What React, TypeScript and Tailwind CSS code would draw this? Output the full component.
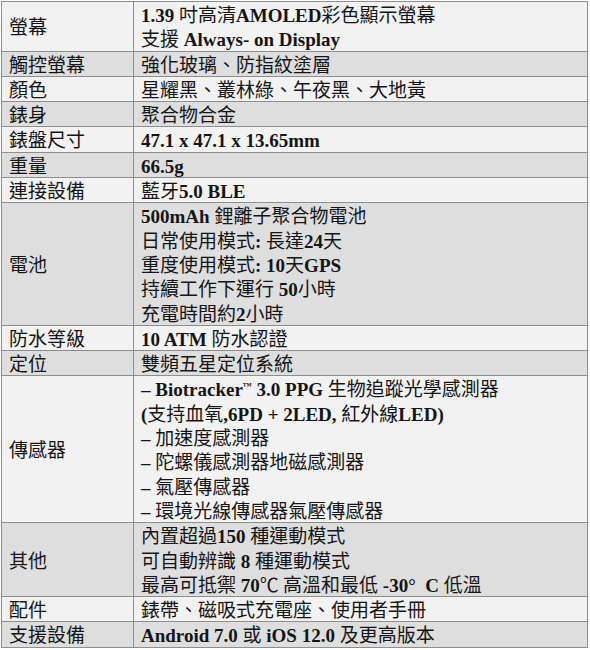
import React from "react";

type Row = { label: string; lines: string[] };

const rows: Row[] = [
  { label: "螢幕", lines: ["1.39 吋高清AMOLED彩色顯示螢幕", "支援 Always- on Display"] },
  { label: "觸控螢幕", lines: ["強化玻璃、防指紋塗層"] },
  { label: "顏色", lines: ["星耀黑、叢林綠、午夜黑、大地黃"] },
  { label: "錶身", lines: ["聚合物合金"] },
  { label: "錶盤尺寸", lines: ["47.1 x 47.1 x 13.65mm"] },
  { label: "重量", lines: ["66.5g"] },
  { label: "連接設備", lines: ["藍牙5.0 BLE"] },
  {
    label: "電池",
    lines: [
      "500mAh 鋰離子聚合物電池",
      "日常使用模式: 長達24天",
      "重度使用模式: 10天GPS",
      "持續工作下運行 50小時",
      "充電時間約2小時",
    ],
  },
  { label: "防水等級", lines: ["10 ATM 防水認證"] },
  { label: "定位", lines: ["雙頻五星定位系統"] },
  {
    label: "傳感器",
    lines: [
      "– Biotracker™ 3.0 PPG 生物追蹤光學感測器",
      "(支持血氧,6PD + 2LED, 紅外線LED)",
      "– 加速度感測器",
      "– 陀螺儀感測器地磁感測器",
      "– 氣壓傳感器",
      "– 環境光線傳感器氣壓傳感器",
    ],
  },
  {
    label: "其他",
    lines: ["內置超過150 種運動模式", "可自動辨識 8 種運動模式", "最高可抵禦 70℃ 高溫和最低 -30°  C 低溫"],
  },
  { label: "配件", lines: ["錶帶、磁吸式充電座、使用者手冊"] },
  { label: "支援設備", lines: ["Android 7.0 或 iOS 12.0 及更高版本"] },
];

const LATIN = /^[\u0020-\u02FF\u2013\u2122]+$/;

function Mixed({ text }: { text: string }) {
  const parts = text.split(/([\u0020-\u02FF\u2013\u2122]+)/).filter((p) => p.length > 0);
  return (
    <>
      {parts.map((p, i) =>
        LATIN.test(p) ? (
          p.trim().length === 0 ? (
            <span key={i} className="whitespace-pre">{p}</span>
          ) : (
            <span key={i} className="whitespace-pre font-['Liberation_Serif',serif] font-bold text-[19px]">
              {p.split("™").map((q, j, arr) =>
                j < arr.length - 1 ? (
                  <React.Fragment key={j}>
                    {q}
                    <span className="relative top-[-7px] text-[9px]">™</span>
                  </React.Fragment>
                ) : (
                  <React.Fragment key={j}>{q}</React.Fragment>
                )
              )}
            </span>
          )
        ) : (
          <span key={i}>{p}</span>
        )
      )}
    </>
  );
}

export default function App() {
  return (
    <div className="w-[590px] h-[650px] bg-white pt-[1px] pl-[1px]">
      <table className="w-[587px] border-collapse font-['Noto_Sans_CJK_TC','Noto_Sans',sans-serif] text-[19px] text-[#151515]">
        <tbody>
          {rows.map((r, i) => (
            <tr key={r.label} className={i % 2 === 0 ? "bg-[#f2f2f2]" : "bg-[#dedede]"}>
              <td className="w-[132px] border border-[#8e8e8e] pl-[7px] align-middle">
                <div className="h-[24.3px] leading-[24.3px] whitespace-nowrap">{r.label}</div>
              </td>
              <td className="border border-[#8e8e8e] pl-[7px] align-middle">
                {r.lines.map((l, k) => (
                  <div key={k} className="h-[24.3px] leading-[24.3px] whitespace-nowrap">
                    <Mixed text={l} />
                  </div>
                ))}
              </td>
            </tr>
          ))}
        </tbody>
      </table>
    </div>
  );
}
